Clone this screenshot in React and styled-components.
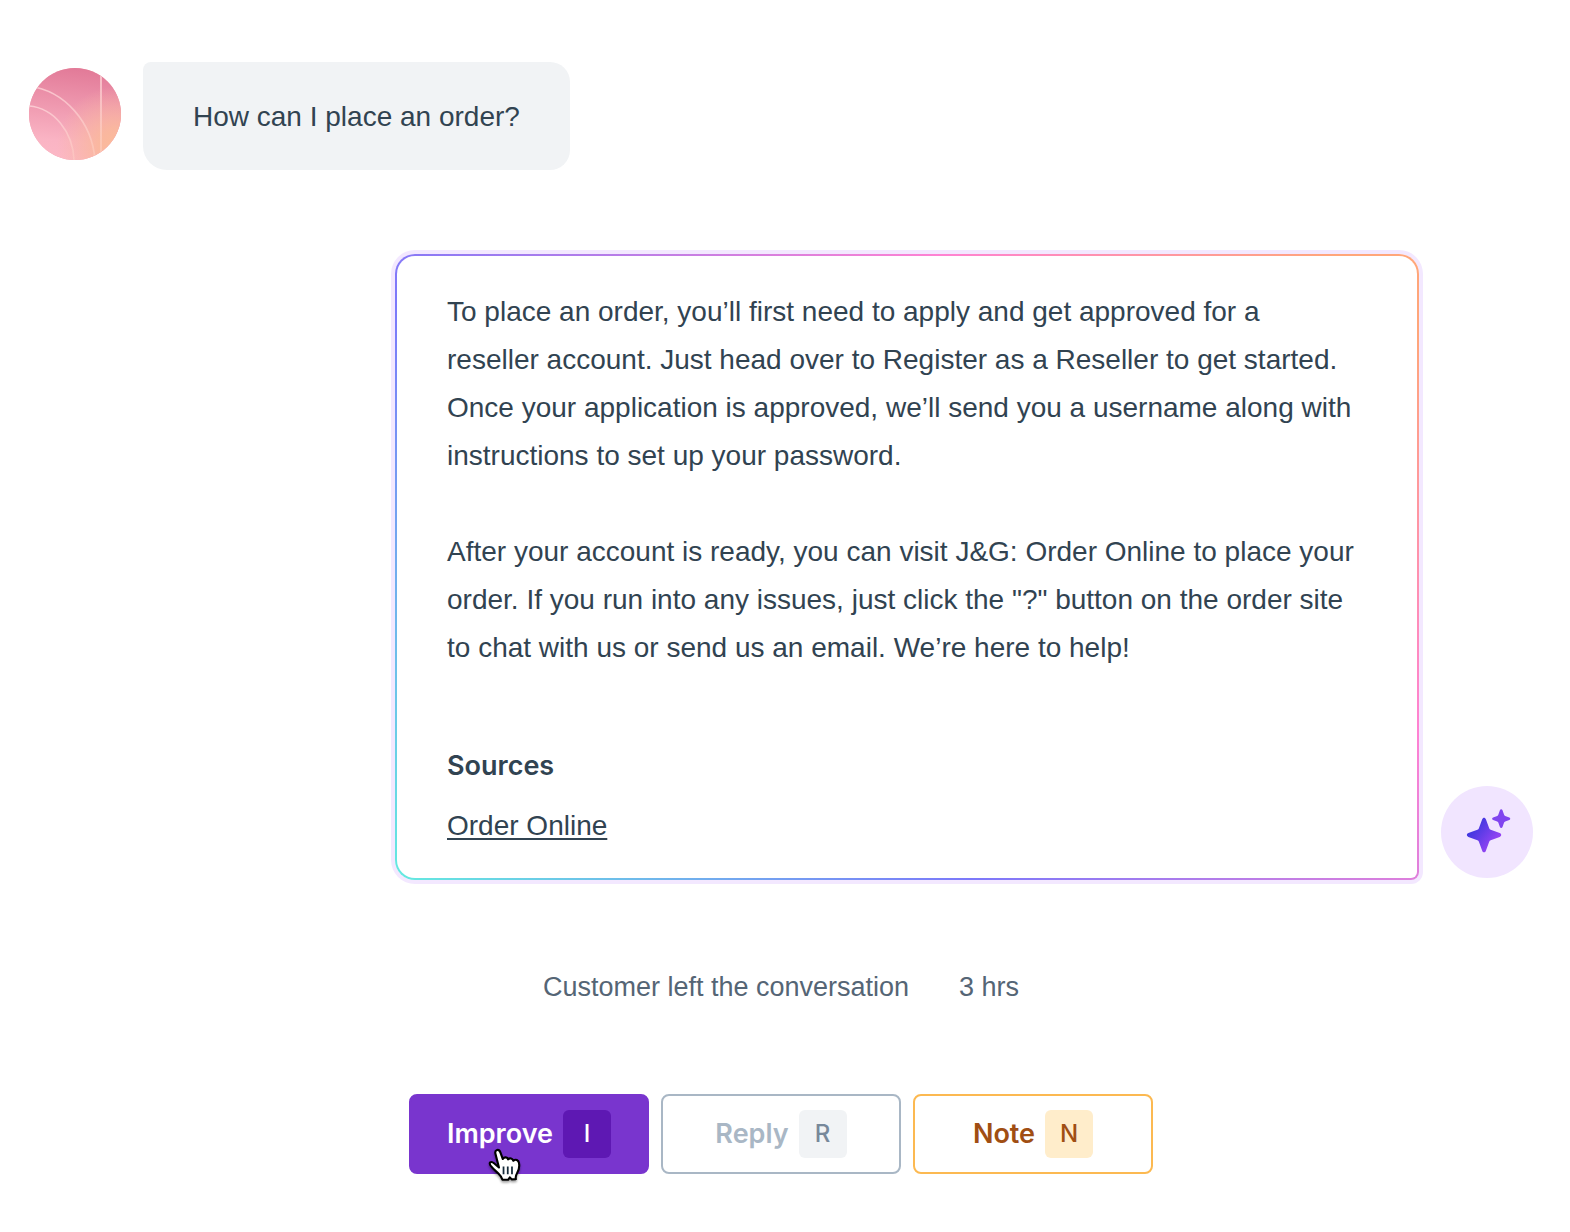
import React from "react";
import styled, { createGlobalStyle } from "styled-components";

const GlobalStyle = createGlobalStyle`
  * {
    box-sizing: border-box;
  }
  body {
    margin: 0;
    background: #fff;
    color: #314351;
    font-family: "Liberation Sans", Arial, sans-serif;
    font-size: 28px;
    line-height: 48px;
  }
  p,
  h2 {
    margin: 0;
  }
`;

const Conversation = styled.main`
  display: flex;
  flex-direction: column;
  padding: 62px 37px 58px 29px;
`;

const Message = styled.div`
  display: flex;
  gap: 22px;
  align-items: ${(props) => (props.$reply ? "flex-end" : "flex-start")};
  justify-content: ${(props) => (props.$reply ? "flex-end" : "flex-start")};
  margin-top: ${(props) => (props.$reply ? "84px" : "0")};
`;

const Avatar = styled.div`
  display: flex;
  flex: none;
  align-items: center;
  justify-content: center;
  width: 92px;
  height: 92px;
  margin: ${(props) => (props.$bot ? "0 0 2px" : "6px 0 0")};
  border-radius: 50%;
  overflow: hidden;
  background: ${(props) => (props.$bot ? "#f1e5ff" : "#f0a0ac")};
`;

const Bubble = styled.div`
  padding: 31px 50px 29px;
  border-radius: 8px 20px 20px 24px;
  background: #f1f3f5;
`;

const AnswerCard = styled.article`
  width: 100%;
  max-width: 1024px;
  padding: 32px 50px 28px;
  border: 2px solid transparent;
  border-radius: 20px 20px 8px 20px;
  background:
    linear-gradient(#fff, #fff) padding-box,
    linear-gradient(
        45deg,
        #64eae0 0%,
        #7c78fa 35%,
        #ff82d2 71%,
        #ffa67a 95%
      )
      border-box;
  box-shadow: 0 0 0 4px #f3e8ff;
`;

const Paragraph = styled.p`
  & + & {
    margin-top: 48px;
  }
`;

const SourcesTitle = styled.h2`
  margin-top: 70px;
  font-family: Inter, "Liberation Sans", sans-serif;
  font-size: 27px;
  font-weight: 600;
`;

const SourceLink = styled.a`
  display: inline-block;
  margin-top: 12px;
  color: inherit;
  text-decoration: underline;
  text-decoration-thickness: 2px;
  text-underline-offset: 3px;
`;

const Status = styled.div`
  display: flex;
  justify-content: center;
  gap: 50px;
  margin-top: 83px;
  color: #556575;
  font-size: 27px;
`;

const Actions = styled.div`
  display: flex;
  justify-content: center;
  gap: 12px;
  margin-top: 83px;
`;

const tones = {
  improve: {
    border: "#7935ce",
    background: "#7935ce",
    color: "#fff",
    keyBackground: "#5e18b3",
    keyColor: "#fff",
  },
  reply: {
    border: "#a9b7c5",
    background: "#fff",
    color: "#a9b7c5",
    keyBackground: "#f1f3f5",
    keyColor: "#77889a",
  },
  note: {
    border: "#fcb951",
    background: "#fff",
    color: "#a04e13",
    keyBackground: "#ffedcb",
    keyColor: "#a04e13",
  },
};

const ActionButton = styled.button`
  position: relative;
  display: flex;
  align-items: center;
  justify-content: center;
  gap: 10px;
  width: 240px;
  height: 80px;
  padding: 0;
  border: 2px solid ${(props) => tones[props.$tone].border};
  border-radius: 8px;
  background: ${(props) => tones[props.$tone].background};
  color: ${(props) => tones[props.$tone].color};
  font-family: Inter, "Liberation Sans", sans-serif;
  font-size: 27px;
  font-weight: 600;
  line-height: 48px;
  cursor: pointer;
`;

const Key = styled.kbd`
  width: 48px;
  height: 48px;
  border-radius: 6px;
  background: ${(props) => tones[props.$tone].keyBackground};
  color: ${(props) => tones[props.$tone].keyColor};
  font-family: inherit;
  font-size: 24px;
  font-weight: 500;
`;

const Pointer = styled.svg`
  position: absolute;
  top: 50px;
  left: 76px;
  filter: drop-shadow(0 2px 1px rgba(0, 0, 0, 0.35));
`;

const CustomerArt = () => (
  <svg width="92" height="92" viewBox="0 0 92 92" aria-hidden="true">
    <defs>
      <linearGradient id="rose" x1="0.5" y1="0" x2="0.4" y2="1">
        <stop offset="0" stopColor="#e27a98" />
        <stop offset="0.8" stopColor="#fab4c4" />
        <stop offset="1" stopColor="#fcb8c6" />
      </linearGradient>
      <radialGradient id="peach" cx="0.95" cy="0.85" r="0.65">
        <stop offset="0" stopColor="#fbbb98" />
        <stop offset="0.3" stopColor="#fab89c" stopOpacity="0.9" />
        <stop offset="1" stopColor="#f8b5a5" stopOpacity="0" />
      </radialGradient>
      <linearGradient id="fade" x1="0" y1="0" x2="0" y2="1">
        <stop offset="0" stopColor="#ffd9dc" stopOpacity="0.75" />
        <stop offset="1" stopColor="#ffd9cc" stopOpacity="0.35" />
      </linearGradient>
    </defs>
    <rect width="92" height="92" fill="url(#rose)" />
    <rect width="92" height="92" fill="url(#peach)" />
    <g fill="none" stroke="url(#fade)" strokeWidth="1.6">
      <path d="M0 18C36 23 63 54 66 92" />
      <path d="M0 38C25 40 44 64 45 92" />
      <path d="M71 0h2v92h-2z" fill="url(#fade)" stroke="none" />
    </g>
  </svg>
);

const Sparkles = () => (
  <svg width="48" height="48" viewBox="-2 -2 48 48" aria-hidden="true">
    <defs>
      <linearGradient
        id="spark"
        gradientUnits="userSpaceOnUse"
        x1="9"
        y1="18"
        x2="29"
        y2="34"
      >
        <stop offset="0" stopColor="#4338e0" />
        <stop offset="1" stopColor="#9644f4" />
      </linearGradient>
    </defs>
    <path
      fill="url(#spark)"
      d="M17.2 9.3c.7-2.1 3-2.1 3.7 0l3.3 9c.3.8.7 1.2 1.5 1.5l9 3.3c2.1.8 2.1 3 0 3.8l-9 3.3c-.8.3-1.2.7-1.5 1.5l-3.3 9c-.7 2.1-3 2.1-3.7 0l-3.3-9c-.3-.8-.7-1.2-1.5-1.5l-9-3.3c-2.1-.8-2.1-3 0-3.8l9-3.3c.8-.3 1.2-.7 1.5-1.5z"
    />
    <path
      fill="#8145ef"
      d="M34.9.2c.4-1.3 2.200-1.3 2.600 0l1.600 4.600c.2.6.5.9 1.100 1.100l4.100 1.500c1.300.4 1.300 2.200 0 2.600l-4.100 1.500c-.6.2-.9.5-1.100 1.100l-1.600 4.500c-.4 1.300-2.200 1.300-2.600 0l-1.600-4.500c-.2-.6-.5-.9-1.100-1.100l-4.100-1.500c-1.300-.4-1.300-2.200 0-2.600l4.100-1.500c.6-.2.9-.5 1.100-1.100z"
    />
  </svg>
);

const HandPointer = () => (
  <Pointer width="38" height="38" viewBox="0 0 108 108" aria-hidden="true">
    <path
      fill="#fff"
      stroke="#000"
      strokeWidth="6"
      strokeLinejoin="round"
      d="M24 22C21 10 34 7 38 18L45 37C49 30 58 31 60 38C65 33 72 35 75 42C81 36 90 40 91 49C93 60 90 70 85 78C82 83 81 88 82 94L70 95L65 89L60 96H44C42 88 38 84 33 79C25 71 18 66 12 58C2 47 12 42 20 49L34 61Z"
    />
    <path stroke="#172b3a" strokeWidth="5" d="M47 58v22M59 58v22M71 58v22" />
  </Pointer>
);

const App = () => {
  return (
    <>
      <GlobalStyle />
      <Conversation>
        <Message>
          <Avatar>
            <CustomerArt />
          </Avatar>
          <Bubble>
            <p>How can I place an order?</p>
          </Bubble>
        </Message>

        <Message $reply>
          <AnswerCard>
            <Paragraph>
              To place an order, you’ll first need to apply and get approved for
              a
              <br />
              reseller account. Just head over to Register as a Reseller to get
              started. Once your application is approved, we’ll send you a
              username along with instructions to set up your password.
            </Paragraph>
            <Paragraph>
              After your account is ready, you can visit J&amp;G: Order Online
              to place your order. If you run into any issues, just click the
              "?" button on the order site to chat with us or send us an email.
              We’re here to help!
            </Paragraph>
            <SourcesTitle>Sources</SourcesTitle>
            <SourceLink href="#order-online">Order Online</SourceLink>
          </AnswerCard>
          <Avatar $bot>
            <Sparkles />
          </Avatar>
        </Message>

        <Status>
          <span>Customer left the conversation</span>
          <span>3 hrs</span>
        </Status>

        <Actions>
          <ActionButton type="button" $tone="improve">
            Improve <Key $tone="improve">I</Key>
            <HandPointer />
          </ActionButton>
          <ActionButton type="button" $tone="reply">
            Reply <Key $tone="reply">R</Key>
          </ActionButton>
          <ActionButton type="button" $tone="note">
            Note <Key $tone="note">N</Key>
          </ActionButton>
        </Actions>
      </Conversation>
    </>
  );
};

export default App;
